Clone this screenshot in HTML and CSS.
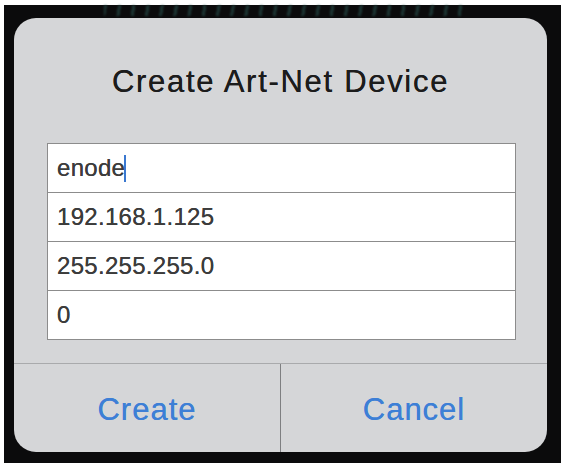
FILE: index.html
```html
<!DOCTYPE html>
<html lang="en">
<head>
  <meta charset="UTF-8" />
  <title>Create Art-Net Device</title>
  <link rel="stylesheet" href="styles.css">
</head>
<body>
  <div class="screen">
    <div class="backdrop"></div>
    <div class="alert">
      <h2 class="alert-title">Create Art-Net Device</h2>

      <div class="fields">
        <div class="field">enode<span class="caret"></span></div>
        <div class="field">192.168.1.125</div>
        <div class="field">255.255.255.0</div>
        <div class="field">0</div>
      </div>

      <div class="actions">
        <button class="action">Create</button>
        <button class="action">Cancel</button>
      </div>
    </div>
  </div>
</body>
</html>
```

FILE: styles.css
```css
body {
  font-family: "Liberation Sans", Arial, sans-serif;
  background-color: #fff;
  margin: 0;
  padding: 0;
}
.screen {
  position: relative;
  margin: 5px 1px 2px 4px;
  padding: 13px 14px 11px 10px;
  background-color: #0b0b0c;
}
/* faint app content showing behind the alert */
.backdrop {
  position: absolute;
  top: 0;
  left: 100px;
  width: 360px;
  height: 11px;
  background: repeating-linear-gradient(100deg, #2c5a55 0 3px, transparent 3px 14px);
  opacity: 0.55;
  filter: blur(1px);
}
.alert {
  position: relative;
  background-color: #d5d6d8;
  border-radius: 22px;
  height: 434px;
  display: flex;
  flex-direction: column;
  overflow: hidden;
}
.alert-title {
  margin: 0;
  height: 125px;
  display: flex;
  align-items: center;
  justify-content: center;
  font-size: 31px;
  font-weight: normal;
  letter-spacing: 1.7px;
  color: #1c1c1c;
  text-shadow: 0 0 0.6px #1c1c1c;
  padding-top: 2px;
  box-sizing: border-box;
}
.fields {
  margin: 0 31px 0 33px;
  border: 1px solid #8c8c8c;
  background-color: #fff;
}
.field {
  height: 48px;
  line-height: 48px;
  padding-left: 9px;
  font-size: 24px;
  color: #3c3c3c;
  letter-spacing: 0.3px;
  text-shadow: 0 0 0.4px #3c3c3c;
}
.field + .field {
  border-top: 1px solid #8c8c8c;
}
.caret {
  display: inline-block;
  width: 2px;
  height: 27px;
  background-color: #3a78d0;
  vertical-align: -6px;
  margin-left: -1px;
}
.actions {
  margin-top: 23px;
  flex: 1;
  display: flex;
  border-top: 1px solid #a9aaac;
}
.action {
  flex: 1;
  background: none;
  border: none;
  font-family: inherit;
  font-size: 31px;
  letter-spacing: 1px;
  color: #3d7fd6;
  text-shadow: 0 0 0.5px #3d7fd6;
  padding: 4px 0 0;
  cursor: pointer;
}
.action + .action {
  border-left: 1px solid #7e7f81;
}
```
